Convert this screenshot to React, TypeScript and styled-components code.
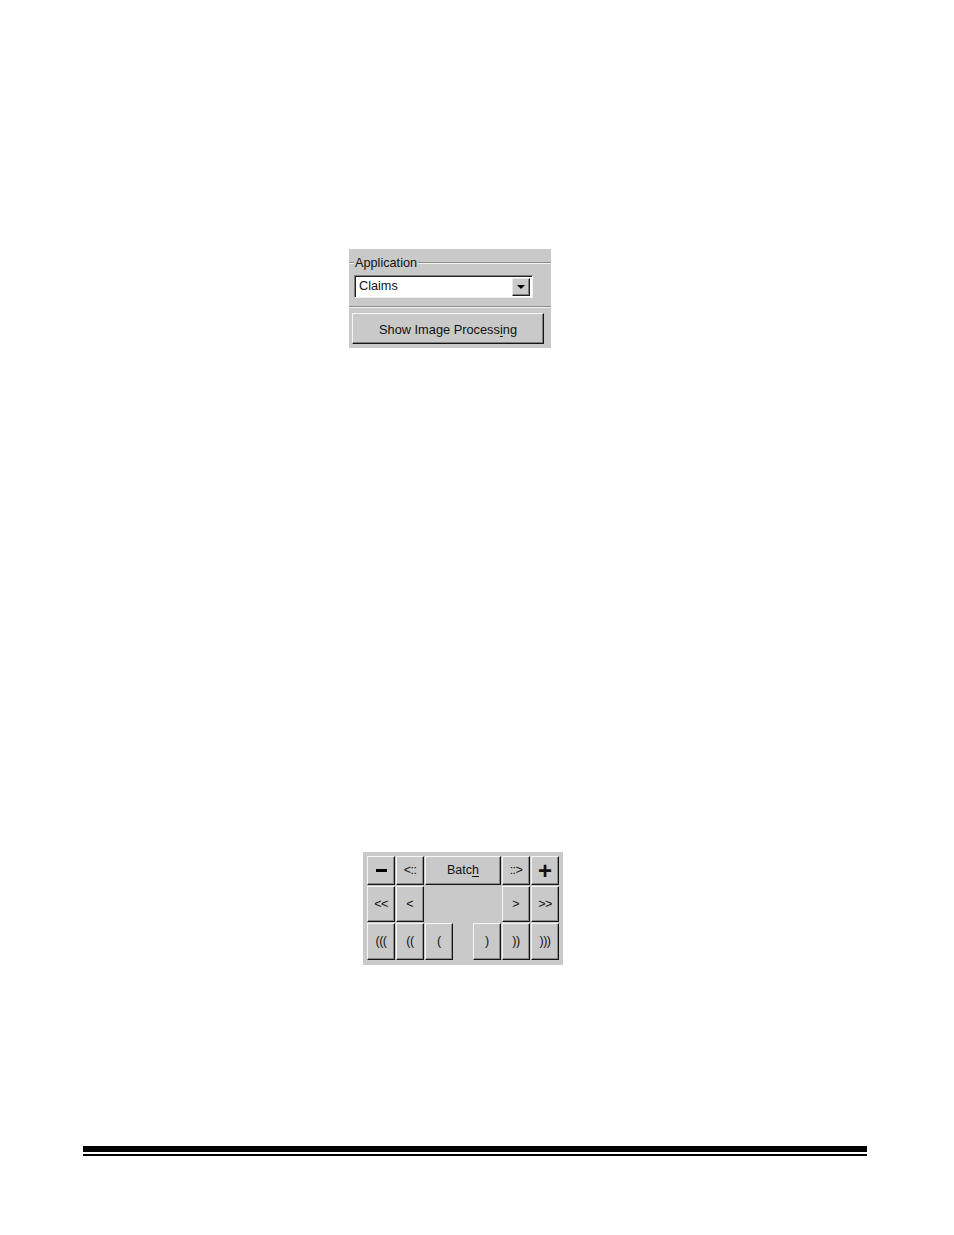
import React from "react";
import styled, { createGlobalStyle } from "styled-components";

const GlobalStyle = createGlobalStyle`
  html, body {
    margin: 0;
    padding: 0;
    background: #ffffff;
  }
  body {
    font-family: "Liberation Sans", Arial, sans-serif;
  }
`;

const FACE = "#c9c9c9";

const Page = styled.div`
  width: 954px;
  height: 1235px;
  background: #fff;
  display: flex;
  flex-direction: column;
  box-sizing: border-box;
  padding-top: 249px;
`;

const AppPanel = styled.div`
  margin-left: 349px;
  width: 202px;
  height: 99px;
  background: ${FACE};
  display: flex;
  flex-direction: column;
  box-sizing: border-box;
  padding-top: 7px;
`;

const GroupHead = styled.div`
  display: flex;
  align-items: center;
  height: 14px;
`;

const Etch = styled.div<{ $w?: number }>`
  height: 0;
  border-top: 1px solid #8a8a8a;
  border-bottom: 1px solid #f4f4f4;
  ${(p) => (p.$w ? `width: ${p.$w}px;` : "flex: 1;")}
`;

const GroupLabel = styled.span`
  font-size: 12.7px;
  color: #111;
  padding: 0 1px 0 1px;
  line-height: 14px;
`;

const Combo = styled.div`
  margin: 5px 0 0 5px;
  width: 179px;
  height: 23px;
  flex: none;
  box-sizing: border-box;
  background: #fff;
  border-top: 1px solid #808080;
  border-left: 1px solid #808080;
  border-right: 1px solid #f0f0f0;
  border-bottom: 1px solid #f0f0f0;
  box-shadow: inset 1px 1px 0 #202020;
  display: flex;
  align-items: center;
  padding: 2px 1px 2px 4px;
`;

const ComboText = styled.span`
  flex: 1;
  font-size: 12.7px;
  color: #111;
  margin-top: -1px;
`;

const ComboArrow = styled.div`
  width: 18px;
  height: 18px;
  box-sizing: border-box;
  background: ${FACE};
  border-top: 1px solid #e8e8e8;
  border-left: 1px solid #e8e8e8;
  border-right: 1px solid #202020;
  border-bottom: 1px solid #202020;
  box-shadow: inset -1px -1px 0 #808080;
  display: flex;
  align-items: center;
  justify-content: center;
  margin-right: 1px;
`;

const Triangle = styled.div`
  width: 0;
  height: 0;
  border-left: 4px solid transparent;
  border-right: 4px solid transparent;
  border-top: 4px solid #000;
  margin-top: 1px;
`;

const BottomEtch = styled.div`
  flex: none;
  height: 0;
  margin-top: 8px;
  border-top: 1px solid #8a8a8a;
  border-bottom: 1px solid #f4f4f4;
`;

const BigButton = styled.div`
  flex: none;
  margin: 5px 0 0 3px;
  width: 192px;
  height: 31px;
  box-sizing: border-box;
  background: ${FACE};
  border-top: 1px solid #f6f6f6;
  border-left: 1px solid #f6f6f6;
  border-right: 1px solid #151515;
  border-bottom: 1px solid #151515;
  box-shadow: inset -1px -1px 0 #808080;
  display: flex;
  align-items: center;
  justify-content: center;
  font-size: 12.8px;
  color: #111;
  padding-top: 1px;
`;

const Mnemonic = styled.span`
  text-decoration: underline;
  text-underline-offset: 2px;
`;

const NavPanel = styled.div`
  margin: 504px 0 0 363px;
  width: 200px;
  height: 113px;
  box-sizing: border-box;
  background: ${FACE};
  padding: 4px 4px 5px 4px;
  display: grid;
  grid-template-columns: 28px 28px 28px 18px 28px 28px 28px;
  grid-template-rows: 29px 36px 37px;
  gap: 1px;
`;

const NavButton = styled.div<{ $span?: number; $big?: boolean; $tight?: boolean }>`
  grid-column: span ${(p) => p.$span || 1};
  box-sizing: border-box;
  background: ${FACE};
  border-top: 1px solid #f6f6f6;
  border-left: 1px solid #f6f6f6;
  border-right: 1px solid #151515;
  border-bottom: 1px solid #151515;
  box-shadow: inset -1px -1px 0 #8a8a8a;
  display: flex;
  align-items: center;
  justify-content: center;
  font-size: ${(p) => (p.$big ? "24px" : "12.5px")};
  font-weight: ${(p) => (p.$big ? 900 : 400)};
  color: #111;
  letter-spacing: ${(p) => (p.$tight ? "-0.5px" : "0")};
  line-height: 1;
`;

const Bar = styled.div`
  width: 11px;
  height: 3px;
  background: #000;
`;

const Hole = styled.div<{ $span?: number }>`
  grid-column: span ${(p) => p.$span || 1};
`;

const Rules = styled.div`
  margin: 181px 0 0 83px;
  width: 784px;
  display: flex;
  flex-direction: column;
  gap: 2px;
`;

const Rule = styled.div<{ $h: number }>`
  height: ${(p) => p.$h}px;
  background: #000;
`;

const App: React.FC = () => {
  return (
    <>
      <GlobalStyle />
      <Page>
        <AppPanel>
          <GroupHead>
            <Etch $w={5} />
            <GroupLabel>Application</GroupLabel>
            <Etch />
          </GroupHead>
          <Combo>
            <ComboText>Claims</ComboText>
            <ComboArrow>
              <Triangle />
            </ComboArrow>
          </Combo>
          <BottomEtch />
          <BigButton>
            Show Image Process<Mnemonic>i</Mnemonic>ng
          </BigButton>
        </AppPanel>

        <NavPanel>
          <NavButton><Bar /></NavButton>
          <NavButton $tight>{"<::"}</NavButton>
          <NavButton $span={3}>
            Batc<Mnemonic>h</Mnemonic>
          </NavButton>
          <NavButton $tight>{"::>"}</NavButton>
          <NavButton $big>+</NavButton>

          <NavButton $tight>{"<<"}</NavButton>
          <NavButton>{"<"}</NavButton>
          <Hole $span={3} />
          <NavButton>{">"}</NavButton>
          <NavButton $tight>{">>"}</NavButton>

          <NavButton $tight>{"((("}</NavButton>
          <NavButton $tight>{"(("}</NavButton>
          <NavButton>{"("}</NavButton>
          <Hole />
          <NavButton>{")"}</NavButton>
          <NavButton $tight>{"))"}</NavButton>
          <NavButton $tight>{")))"}</NavButton>
        </NavPanel>

        <Rules>
          <Rule $h={6} />
          <Rule $h={2} />
        </Rules>
      </Page>
    </>
  );
};

export default App;
